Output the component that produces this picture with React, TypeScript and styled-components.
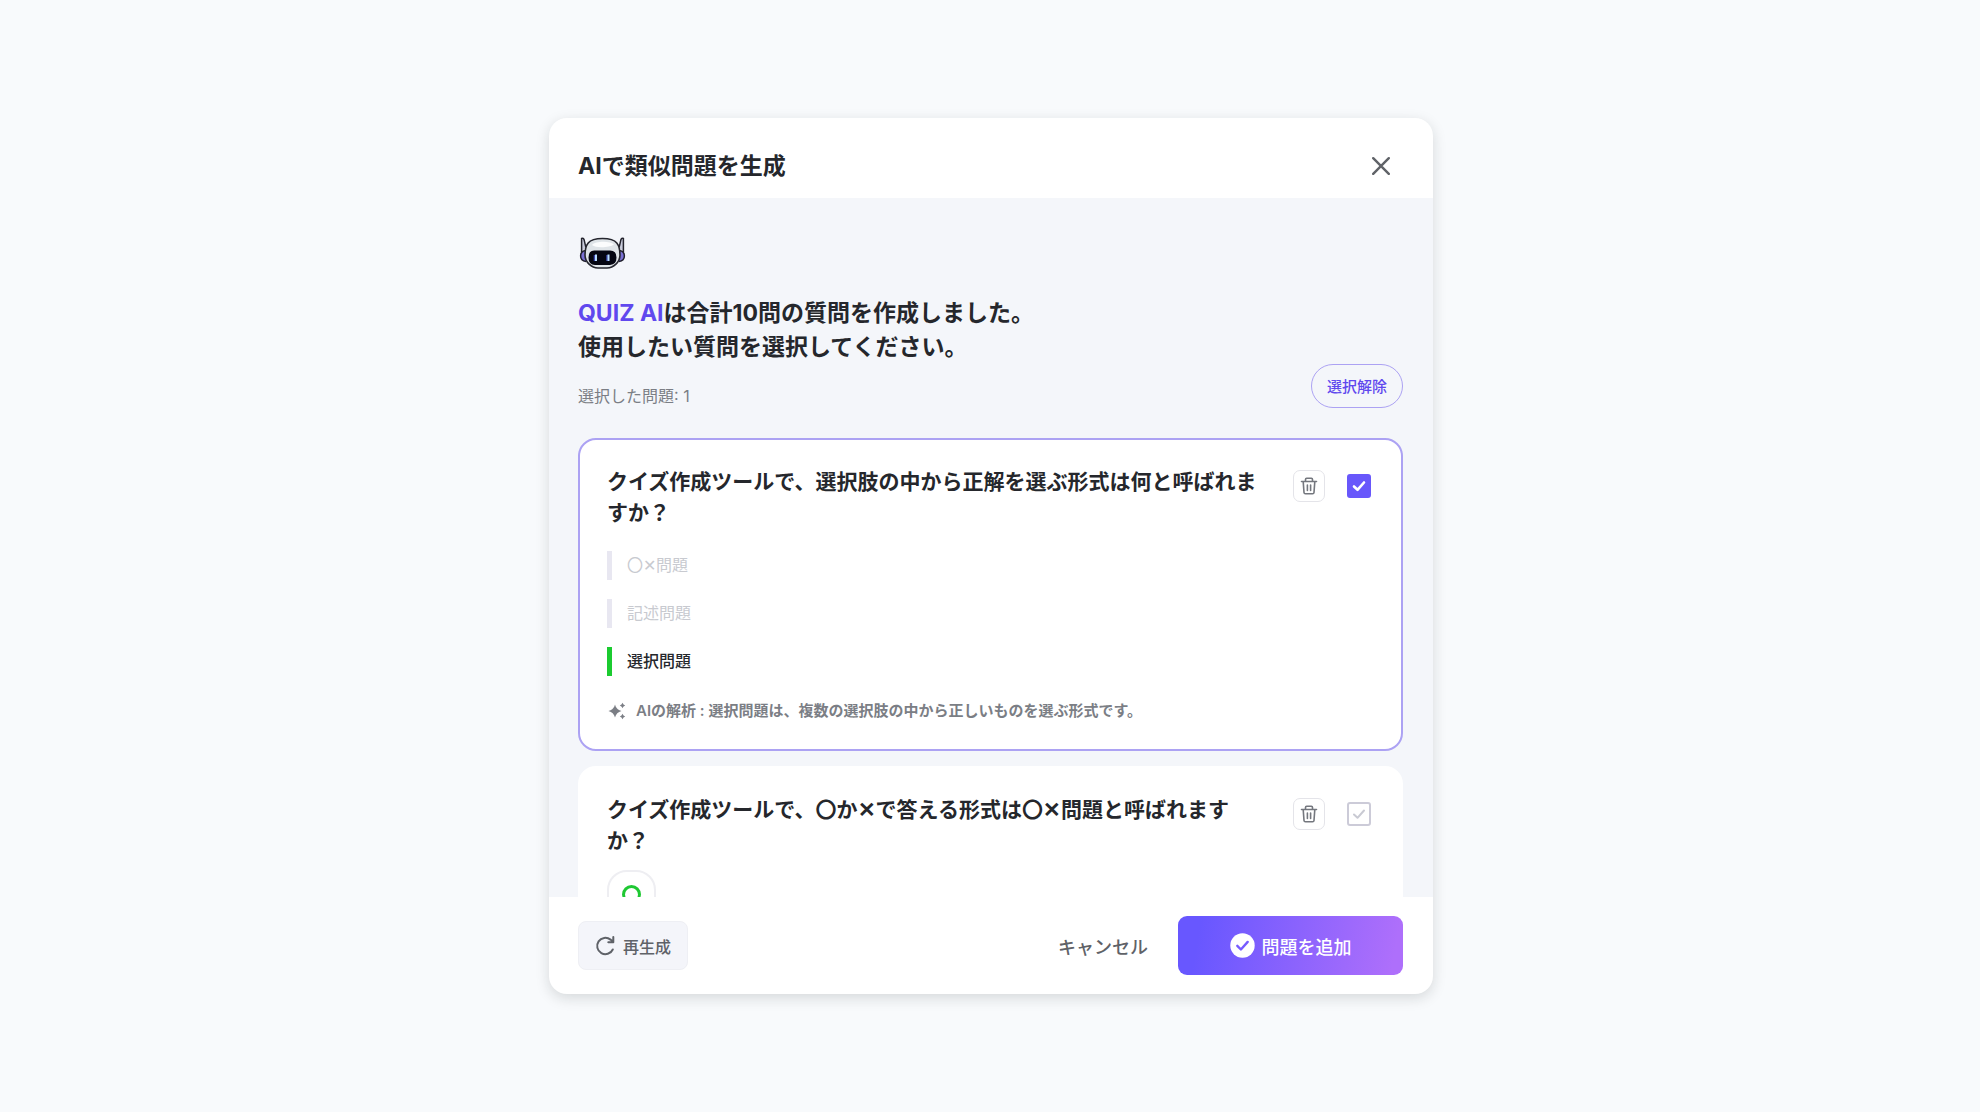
import React, { useState } from "react";
import styled, { createGlobalStyle, css } from "styled-components";

const GlobalStyle = createGlobalStyle`
  *, *::before, *::after { box-sizing: border-box; }
  body {
    margin: 0;
    background: #f8fafc;
    color: #25272c;
    font-family: Inter, "Noto Sans CJK JP", sans-serif;
    -webkit-font-smoothing: antialiased;
  }
  button { font: inherit; cursor: pointer; }
  h1, h2, h3, p, ul { margin: 0; padding: 0; }
`;

const Page = styled.main`
  display: flex;
  align-items: center;
  justify-content: center;
  height: 100vh;
  padding: 118px 24px 118px 26px;
`;

const Dialog = styled.section`
  display: flex;
  flex-direction: column;
  width: 100%;
  max-width: 884px;
  max-height: 100%;
  overflow: hidden;
  border-radius: 18px;
  background: #fff;
  box-shadow: 0 4px 14px rgba(20, 24, 30, 0.15);
`;

const Header = styled.header`
  display: flex;
  flex: none;
  align-items: center;
  justify-content: space-between;
  height: 80px;
  padding: 16px 36px 0 29px;
`;

const Title = styled.h1`
  font-size: 23px;
  font-weight: 700;
  line-height: 34px;
`;

const CloseButton = styled.button`
  display: grid;
  place-items: center;
  width: 32px;
  height: 32px;
  padding: 0;
  border: 0;
  background: none;
  color: #606368;
`;

const Body = styled.div`
  flex: 1;
  min-height: 0;
  padding: 36px 30px 29px 29px;
  overflow-y: auto;
  scrollbar-width: none;
  background: #f4f6fa;
`;

const Lead = styled.h2`
  margin-top: 22px;
  font-size: 23px;
  font-weight: 700;
  line-height: 34px;
`;

const Brand = styled.span`
  color: #6048ee;
`;

const Summary = styled.div`
  display: flex;
  align-items: flex-end;
  justify-content: space-between;
  height: 44px;
  margin-bottom: 30px;
`;

const Count = styled.p`
  font-size: 16px;
  line-height: 24px;
  color: #7b7e85;
`;

const ClearButton = styled.button`
  height: 44px;
  padding: 0 15px 2px;
  border: 1px solid #aca2f3;
  border-radius: 22px;
  background: transparent;
  color: #6048ee;
  font-size: 15px;
  font-weight: 500;
`;

const CardList = styled.ul`
  display: flex;
  flex-direction: column;
  gap: 15px;
  list-style: none;
`;

const Card = styled.li<{ $selected: boolean }>`
  padding: 26px 27px 24px;
  border: 2px solid ${(p) => (p.$selected ? "#aca2f3" : "#fff")};
  border-radius: 18px;
  background: #fff;
`;

const CardHead = styled.div`
  display: flex;
  align-items: flex-start;
  justify-content: space-between;
  gap: 28px;
`;

const Question = styled.h3`
  flex: 1;
  font-size: 21px;
  font-weight: 700;
  line-height: 31px;
`;

const Controls = styled.div`
  display: flex;
  align-items: center;
  gap: 22px;
  padding: 4px 3px 0 0;
`;

const TrashButton = styled.button`
  display: grid;
  place-items: center;
  width: 32px;
  height: 32px;
  padding: 0;
  border: 1px solid #e4e4e9;
  border-radius: 7px;
  background: #fff;
  color: #74777e;
`;

const CheckLabel = styled.label`
  display: grid;
  place-items: center;
  width: 24px;
  height: 24px;
  cursor: pointer;

  > * { grid-area: 1 / 1; }
  > svg { pointer-events: none; z-index: 1; color: #c9cad3; }
  > input:checked + svg { color: #fff; }
`;

const CheckInput = styled.input`
  appearance: none;
  width: 24px;
  height: 24px;
  margin: 0;
  border: 2px solid #cccbd8;
  border-radius: 3px;
  background: #fff;

  &:checked { border-color: #6857fb; background: #6857fb; }
`;

const Options = styled.ul`
  display: flex;
  flex-direction: column;
  gap: 19px;
  margin-top: 23px;
  list-style: none;
`;

const Option = styled.li<{ $correct: boolean }>`
  padding-left: 15px;
  border-left: 5px solid ${(p) => (p.$correct ? "#1bcb30" : "#e8e7f1")};
  color: ${(p) => (p.$correct ? "#25272c" : "#c8cad0")};
  font-size: 16px;
  font-weight: ${(p) => (p.$correct ? 500 : 400)};
  line-height: 29px;
`;

const Analysis = styled.p`
  display: flex;
  align-items: center;
  gap: 9px;
  margin-top: 21px;
  font-size: 15px;
  font-weight: 600;
  line-height: 28px;
  color: #7b7e85;
`;

const Marks = styled.div`
  display: flex;
  flex-direction: column;
  gap: 12px;
  margin-top: 14px;
`;

const Mark = styled.div<{ $correct: boolean }>`
  display: grid;
  place-items: center;
  width: 49px;
  height: 49px;
  border: 2px solid #eeeef2;
  border-radius: 20px;
  color: ${(p) => (p.$correct ? "#1fc833" : "#c8cad0")};
`;

const Footer = styled.footer`
  display: flex;
  flex: none;
  align-items: center;
  justify-content: space-between;
  height: 97px;
  padding: 0 30px 0 29px;
`;

const FooterActions = styled.div`
  display: flex;
  align-items: center;
  gap: 30px;
`;

const footerButton = css`
  display: flex;
  align-items: center;
  justify-content: center;
  border: 0;
`;

const RegenerateButton = styled.button`
  ${footerButton}
  gap: 7px;
  width: 110px;
  height: 49px;
  padding: 0;
  border: 1px solid #eeeff4;
  border-radius: 8px;
  background: #f4f5fa;
  color: #5f6268;
  font-size: 16px;
  font-weight: 500;
`;

const CancelButton = styled.button`
  ${footerButton}
  padding: 0;
  background: none;
  color: #5f6268;
  font-size: 18px;
  font-weight: 500;
`;

const AddButton = styled.button`
  ${footerButton}
  gap: 7px;
  width: 225px;
  height: 59px;
  padding: 0;
  border-radius: 9px;
  background: linear-gradient(100deg, #6857ff 10%, #ae6ffb 95%);
  color: #fff;
  font-size: 18px;
  font-weight: 500;
`;

const CloseIcon = () => (
  <svg width="18" height="18" viewBox="0 0 18 18" fill="none" stroke="currentColor" strokeWidth="2.4" strokeLinecap="round">
    <path d="M1.200 1.200l15.600 15.600M16.800 1.200l-15.600 15.600" />
  </svg>
);

const RobotSvg = styled.svg`
  display: block;
`;

const RobotIcon = () => (
  <RobotSvg width="48" height="40" viewBox="0 0 48 40" fill="none">
    <path d="M3.600 18V4.500q1.800-.9 2.600 1.600l1.600 7M45.400 18V4.500q-1.800-.9-2.600 1.600l-1.600 7" fill="#c9ccdc" stroke="#23232c" strokeWidth="1.500" />
    <path d="M7.500 16.500C4 17 2.600 19.500 2.600 22s1.800 5 5.400 5.600M41.500 16.500c3.500.5 4.900 3 4.900 5.500s-1.800 5-5.400 5.600" fill="#7a70d4" stroke="#20202c" strokeWidth="1.500" />
    <path d="M24.500 4.500c-6 0-11.500 1-14.300 4.500C7.600 12.200 7 17 7 21c0 7 6.500 13 13 13h9c6.500 0 13-6 13-13 0-4-.6-8.800-3.200-12-2.800-3.500-8.300-4.500-14.300-4.500z" fill="#dfe4e8" stroke="#25262e" strokeWidth="1.600" />
    <path d="M14 11c3-4 18-4.500 22-.5-4 3-18 4-22 .5z" fill="#fbfcfd" />
    <path d="M17 16.500h15q6.500 0 6.500 7T32 31H17q-6.500 0-6.500-7.500T17 16.500z" fill="#050612" />
    <path d="M16.500 21v6M29 21v6" stroke="#3945ae" strokeWidth="1.500" />
    <path d="M18 20.500v6.500M30.500 20.500v6.500" stroke="#b7dcff" strokeWidth="2" />
  </RobotSvg>
);

const TrashIcon = () => (
  <svg width="18" height="18" viewBox="0 0 18 18" fill="none" stroke="currentColor" strokeWidth="1.6" strokeLinecap="round" strokeLinejoin="round">
    <path d="M1.500 4.500h15M5.500 4.500V2.500q0-1.200 1.200-1.200h4.600q1.200 0 1.200 1.200v2M3.200 4.500l.8 11q.1 1.300 1.400 1.300h7.200q1.300 0 1.400-1.300l.8-11M7.400 8v5.500M10.600 8v5.500" />
  </svg>
);

const CheckIcon = ({ weight }: { weight: number }) => (
  <svg width="14" height="12" viewBox="0 0 14 12" fill="none" stroke="currentColor" strokeWidth={weight} strokeLinecap="round" strokeLinejoin="round">
    <path d="M2 6.500l3.500 3.300L12 2.500" />
  </svg>
);

const SparkleIcon = () => (
  <svg width="20" height="18" viewBox="0 0 20 18" fill="currentColor">
    <path d="M8 2.500q1.300 5.200 6.500 6.500-5.200 1.300-6.500 6.500-1.300-5.200-6.500-6.500 5.200-1.300 6.500-6.500zM15.500.8q.7 2 2.700 2.700-2 .7-2.700 2.700-.7-2-2.700-2.700 2-.7 2.700-2.700zM15.500 11.800q.7 2 2.700 2.700-2 .7-2.700 2.700-.7-2-2.700-2.700 2-.7 2.700-2.700z" />
  </svg>
);

const RefreshIcon = () => (
  <svg width="21" height="21" viewBox="0 0 21 21" fill="none" stroke="currentColor" strokeWidth="2" strokeLinecap="round" strokeLinejoin="round">
    <path d="M17.800 14.500A8.200 8.200 0 1 1 15.500 4.600L18 6.800M18.300 2v5.300h-5" />
  </svg>
);

const CheckCircleIcon = () => (
  <svg width="25" height="25" viewBox="0 0 25 25" fill="none">
    <circle cx="12.500" cy="12.500" r="12.200" fill="#fff" />
    <path d="M7.300 12.800l3.600 3.700 6.800-7.600" stroke="#765bff" strokeWidth="2.400" strokeLinecap="round" strokeLinejoin="round" />
  </svg>
);

const CircleMark = () => (
  <svg width="19" height="19" viewBox="0 0 19 19" fill="none" stroke="currentColor" strokeWidth="3">
    <circle cx="9.500" cy="9.500" r="8" />
  </svg>
);

const CrossMark = () => (
  <svg width="19" height="19" viewBox="0 0 19 19" fill="none" stroke="currentColor" strokeWidth="3" strokeLinecap="round">
    <path d="M3 3l13 13M16 3L3 16" />
  </svg>
);

type QuizItem = {
  text: string;
  options?: { text: string; correct: boolean }[];
  analysis?: string;
};

const items: QuizItem[] = [
  {
    text: "クイズ作成ツールで、選択肢の中から正解を選ぶ形式は何と呼ばれますか？",
    options: [
      { text: "〇✕問題", correct: false },
      { text: "記述問題", correct: false },
      { text: "選択問題", correct: true },
    ],
    analysis: "AIの解析 : 選択問題は、複数の選択肢の中から正しいものを選ぶ形式です。",
  },
  { text: "クイズ作成ツールで、〇か✕で答える形式は〇✕問題と呼ばれますか？" },
];

function QuizCard({ item, selected, onToggle }: { item: QuizItem; selected: boolean; onToggle: () => void }) {
  return (
    <Card $selected={selected}>
      <CardHead>
        <Question>{item.text}</Question>
        <Controls>
          <TrashButton type="button" aria-label="削除">
            <TrashIcon />
          </TrashButton>
          <CheckLabel>
            <CheckInput type="checkbox" checked={selected} onChange={onToggle} aria-label={item.text} />
            <CheckIcon weight={selected ? 2.6 : 2} />
          </CheckLabel>
        </Controls>
      </CardHead>
      {item.options ? (
        <Options>
          {item.options.map((o) => (
            <Option key={o.text} $correct={o.correct}>{o.text}</Option>
          ))}
        </Options>
      ) : (
        <Marks>
          <Mark $correct><CircleMark /></Mark>
          <Mark $correct={false}><CrossMark /></Mark>
        </Marks>
      )}
      {item.analysis && (
        <Analysis>
          <SparkleIcon />
          {item.analysis}
        </Analysis>
      )}
    </Card>
  );
}

export default function App() {
  const [selected, setSelected] = useState<boolean[]>([true, false]);
  const toggle = (index: number) => setSelected((s) => s.map((v, i) => (i === index ? !v : v)));

  return (
    <>
      <GlobalStyle />
      <Page>
        <Dialog role="dialog" aria-labelledby="dialog-title">
          <Header>
            <Title id="dialog-title">AIで類似問題を生成</Title>
            <CloseButton type="button" aria-label="閉じる">
              <CloseIcon />
            </CloseButton>
          </Header>
          <Body>
            <RobotIcon />
            <Lead>
              <Brand>QUIZ AI</Brand>は合計10問の質問を作成しました。
              <br />
              使用したい質問を選択してください。
            </Lead>
            <Summary>
              <Count>選択した問題: {selected.filter(Boolean).length}</Count>
              <ClearButton type="button" onClick={() => setSelected((s) => s.map(() => false))}>選択解除</ClearButton>
            </Summary>
            <CardList>
              {items.map((item, i) => (
                <QuizCard key={item.text} item={item} selected={selected[i]} onToggle={() => toggle(i)} />
              ))}
            </CardList>
          </Body>
          <Footer>
            <RegenerateButton type="button">
              <RefreshIcon />
              再生成
            </RegenerateButton>
            <FooterActions>
              <CancelButton type="button">キャンセル</CancelButton>
              <AddButton type="button">
                <CheckCircleIcon />
                問題を追加
              </AddButton>
            </FooterActions>
          </Footer>
        </Dialog>
      </Page>
    </>
  );
}
